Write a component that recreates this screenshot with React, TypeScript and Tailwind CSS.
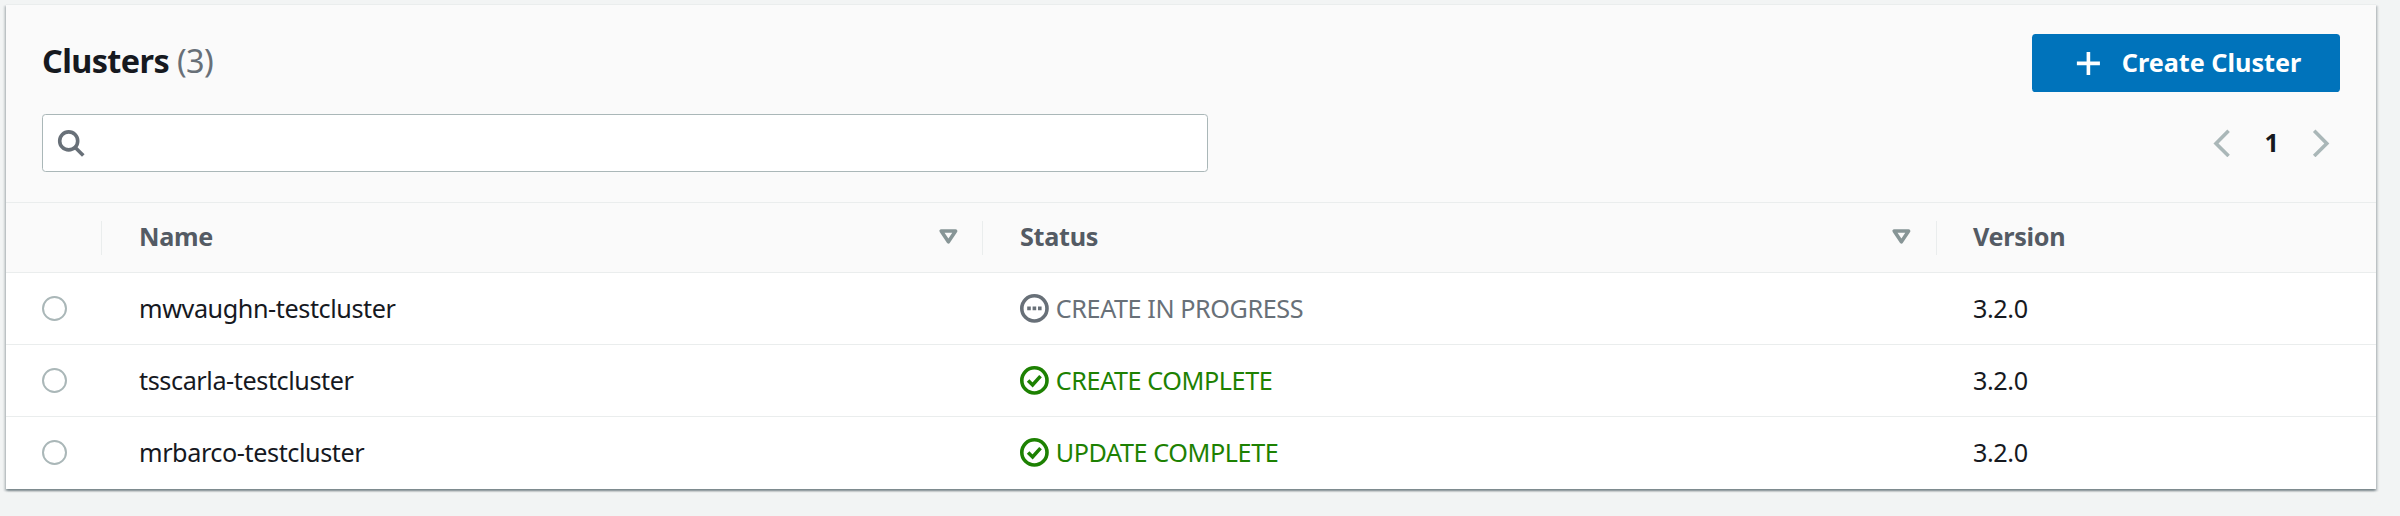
import React from "react";

type Status = "progress" | "success";

interface Cluster {
  name: string;
  label: string;
  status: Status;
  version: string;
}

const clusters: Cluster[] = [
  { name: "mwvaughn-testcluster", label: "CREATE IN PROGRESS", status: "progress", version: "3.2.0" },
  { name: "tsscarla-testcluster", label: "CREATE COMPLETE", status: "success", version: "3.2.0" },
  { name: "mrbarco-testcluster", label: "UPDATE COMPLETE", status: "success", version: "3.2.0" },
];

const columns = "grid grid-cols-[96px_881px_954px_1fr]";

function StatusIcon({ status }: { status: Status }) {
  return (
    <svg viewBox="0 0 16 16" className="mt-0.5 size-[28.8px] shrink-0" fill="none" stroke="currentColor" strokeWidth="2">
      <circle cx="8" cy="8" r="7" />
      {status === "progress" ? (
        <path d="M4 8h2M7 8h2M10 8h2" />
      ) : (
        <path d="M4.5 8l2.5 2.5 4.4-4.9" />
      )}
    </svg>
  );
}

function SortIcon() {
  return (
    <svg viewBox="0 0 16 16" className="size-[28.8px] shrink-0" fill="none" stroke="#879596" strokeWidth="2" strokeLinejoin="round">
      <path d="M4 5h8l-4 6z" />
    </svg>
  );
}

function HeaderCell({ children, className = "", divider, sortable }: { children?: React.ReactNode; className?: string; divider?: boolean; sortable?: boolean }) {
  return (
    <div className="flex items-center">
      <div className={`flex flex-1 items-center justify-between pb-[2px] ${className}`}>
        <span className="pb-0.5">{children}</span>
        {sortable && <SortIcon />}
      </div>
      {divider && <div className="h-[34px] w-px bg-[#eaeded]" />}
    </div>
  );
}

export default function App() {
  return (
    <div className="h-[516px] w-[2400px] bg-[#f2f4f4] pt-1 pl-1.5 font-['Noto_Sans',sans-serif] text-[25.2px] leading-9 text-[#16191f]">
      <section className="flex h-[485px] w-[2370px] flex-col border-t border-[#eaeded] bg-white shadow-[0_1.8px_1.8px_0_rgba(0,28,36,0.3),1.8px_1.8px_1.8px_0_rgba(0,28,36,0.15),-1.8px_1.8px_1.8px_0_rgba(0,28,36,0.15)]">
        <header className="h-[198px] border-b border-[#eaeded] bg-[#fafafa] px-9 pt-[29px]">
          <div className="flex h-[58px] items-center justify-between">
            <h1 className="pb-[7px] text-[32.4px] font-bold tracking-[-0.6px]">
              Clusters <span className="font-normal text-[#687078]">(3)</span>
            </h1>
            <button className="flex h-[58px] w-[308px] items-center rounded-[3.6px] bg-[#0073bb] pl-[42px] font-bold text-white">
              <svg viewBox="0 0 16 16" className="mr-[19px] size-[28.8px]" fill="none" stroke="currentColor" strokeWidth="2">
                <path d="M8 1.6v12.8M1.6 8h12.8" />
              </svg>
              <span className="pb-[3px]">Create Cluster</span>
            </button>
          </div>
          <div className="mt-[22px] flex h-[58px] items-center justify-between">
            <div className="flex h-[58px] w-[1166px] items-center rounded-[3.6px] border border-[#aab7b8] bg-white pl-[14px]">
              <svg viewBox="0 0 16 16" className="size-[28.8px]" fill="none" stroke="#687078" strokeWidth="2">
                <circle cx="6.5" cy="6.6" r="5" />
                <path d="M10 10.1l4.6 4.6" />
              </svg>
            </div>
            <nav className="flex items-center pr-1">
              <svg viewBox="0 0 16 16" className="size-[28.8px]" fill="none" stroke="#aab7b8" strokeWidth="2">
                <path d="M12 1L5 8l7 7" />
              </svg>
              <span className="w-[71px] pb-[3px] text-center font-bold">1</span>
              <svg viewBox="0 0 16 16" className="size-[28.8px]" fill="none" stroke="#aab7b8" strokeWidth="2">
                <path d="M4 1l7 7-7 7" />
              </svg>
            </nav>
          </div>
        </header>

        <div className={`${columns} h-[70px] border-b border-[#eaeded] bg-[#fafafa] font-bold tracking-[-0.3px] text-[#545b64]`}>
          <HeaderCell divider />
          <HeaderCell className="pr-[19px] pl-[37px]" divider sortable>Name</HeaderCell>
          <HeaderCell className="pr-5 pl-[37px]" divider sortable>Status</HeaderCell>
          <HeaderCell className="pl-9">Version</HeaderCell>
        </div>

        {clusters.map((cluster) => (
          <div key={cluster.name} className={`${columns} h-[72px] items-center border-b border-[#eaeded] tracking-[-0.42px] last:border-transparent`}>
            <div className="pl-9">
              <div className="size-[25px] rounded-full border-2 border-[#aab7b8] bg-white" />
            </div>
            <div className="pb-0.5 pl-[37px]">{cluster.name}</div>
            <div className={`flex items-center gap-[7px] pb-0.5 pl-[37px] ${cluster.status === "success" ? "text-[#1d8102]" : "text-[#687078]"}`}>
              <StatusIcon status={cluster.status} />
              <span>{cluster.label}</span>
            </div>
            <div className="pb-0.5 pl-9">{cluster.version}</div>
          </div>
        ))}
      </section>
    </div>
  );
}
